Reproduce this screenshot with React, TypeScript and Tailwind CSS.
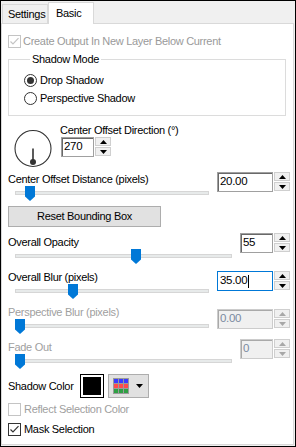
import clsx from "clsx";

function Check({ checked, disabled }: { checked?: boolean; disabled?: boolean }) {
  const c = disabled ? "#c4c4c4" : "#333333";
  return (
    <svg width="13" height="13" viewBox="0 0 13 13" className="shrink-0">
      <rect x="0.5" y="0.5" width="12" height="12" fill="#fff" stroke={c} />
      {checked && <path d="M2.5 6.5 L5 9 L10.5 3.2" fill="none" stroke={c} strokeWidth="1.2" />}
    </svg>
  );
}

function Radio({ on }: { on?: boolean }) {
  return (
    <svg width="13" height="13" viewBox="0 0 13 13" className="shrink-0">
      <circle cx="6.5" cy="6.5" r="6" fill="#fff" stroke="#333" />
      {on && <circle cx="6.5" cy="6.5" r="3.5" fill="#333" />}
    </svg>
  );
}

function Arrow({ up, color }: { up?: boolean; color: string }) {
  return (
    <svg width="7" height="4" viewBox="0 0 7 4">
      <path d={up ? "M0 4 L3.5 0 L7 4 Z" : "M0 0 L7 0 L3.5 4 Z"} fill={color} />
    </svg>
  );
}

function Spin({
  value,
  box,
  disabled,
  focused,
}: {
  value: string;
  box: string;
  disabled?: boolean;
  focused?: boolean;
}) {
  const arrow = disabled ? "#a8a8a8" : "#000";
  return (
    <div className="flex h-[20px] shrink-0">
      <div
        className={clsx(
          "flex h-full items-center border pl-[2px] text-[11.5px]",
          box,
          focused && "border-[#0078d7] bg-white",
          disabled && "border-[#cccccc] bg-[#f0f0f0] text-[#7a8aa0] shadow-[inset_1px_1px_0_#a9a9a9]",
          !focused && !disabled && "border-[#a0a0a0] bg-white shadow-[inset_1px_1px_0_#696969]"
        )}
      >
        {value}
        {focused && <span className="ml-[1px] h-[13px] w-[1px] bg-black" />}
      </div>
      <div className="ml-[1px] flex w-[16px] flex-col gap-[1px]">
        <div className="flex h-[9px] items-center justify-center border border-[#cfcfcf] bg-[#f0f0f0]">
          <Arrow up color={arrow} />
        </div>
        <div className="flex h-[9px] items-center justify-center border border-[#cfcfcf] bg-[#f0f0f0]">
          <Arrow color={arrow} />
        </div>
      </div>
    </div>
  );
}

function Track({ thumb }: { thumb: number }) {
  return (
    <div className="relative ml-[7px] h-[15px] pt-[5px]">
      <div className="h-[4px] border border-[#d6d6d6] bg-[#e7eaea]" />
      <svg width="10" height="15" viewBox="0 0 10 15" className="absolute top-0" style={{ left: thumb }}>
        <path d="M0 0 H10 V10.5 L5 15 L0 10.5 Z" fill="#0078d7" />
      </svg>
    </div>
  );
}

function SliderBlock({
  label,
  value,
  box,
  thumb,
  disabled,
  focused,
  labelOff,
  spinOff,
  className,
}: {
  label: string;
  value: string;
  box: string;
  thumb: number;
  disabled?: boolean;
  focused?: boolean;
  labelOff?: string;
  spinOff?: string;
  className?: string;
}) {
  return (
    <div className={clsx("flex items-start pl-[6px] pr-[3px]", className)}>
      <div className={clsx("mr-[8px] flex-1", labelOff)}>
        <div className={clsx("h-[14px] whitespace-nowrap leading-[14px]", disabled && "text-[#a0a0a0]")}>{label}</div>
        <Track thumb={thumb} />
      </div>
      <div className={spinOff}>
        <Spin value={value} box={box} disabled={disabled} focused={focused} />
      </div>
    </div>
  );
}

function ColorGrid() {
  const rows = ["#3a3aff", "#ff4a4a", "#2ea043"];
  return (
    <svg width="16" height="16" viewBox="0 0 16 16">
      <rect x="0" y="0" width="16" height="16" fill="#9a9a9a" />
      {rows.map((c, r) =>
        [0, 1, 2].map((col) => (
          <rect key={`${r}-${col}`} x={1 + col * 5} y={1 + r * 5} width="4" height="4" fill={c} />
        ))
      )}
    </svg>
  );
}

export default function App() {
  return (
    <div className="h-[447px] w-[296px] overflow-hidden border border-black bg-[#f0f0f0] text-[11px] tracking-[-0.3px] text-black [font-family:'Liberation_Sans',Arial,sans-serif]">
      {/* tab strip */}
      <div className="flex h-[22px] items-end pl-[1px]">
        <div className="flex h-[19px] w-[46px] items-center border border-b-0 border-[#d9d9d9] bg-[#f0f0f0] pl-[5px]">
          Settings
        </div>
        <div className="relative z-10 -mb-[1px] h-[22px] w-[46px] border border-b-0 border-[#d9d9d9] bg-white pl-[7px] pt-[3px] leading-[14px]">
          Basic
        </div>
      </div>

      {/* tab page */}
      <div className="h-[422px] w-[293px] border border-[#d9d9d9] bg-white">
        <div className="mt-[10px] flex h-[14px] items-center gap-[2px] whitespace-nowrap pl-[6px] text-[#9a9a9a]">
          <Check checked disabled />
          <span>Create Output In New Layer Below Current</span>
        </div>

        <fieldset className="ml-[6px] mr-[7px] mt-[4px] border border-[#dcdcdc] pb-[10px] pl-[15px]">
          <legend className="ml-[6px] px-[2px] leading-[14px]">Shadow Mode</legend>
          <div className="mt-[7px] flex h-[14px] items-center gap-[3px]">
            <Radio on />
            <span>Drop Shadow</span>
          </div>
          <div className="mt-[4px] flex h-[14px] items-center gap-[3px]">
            <Radio />
            <span>Perspective Shadow</span>
          </div>
        </fieldset>

        <div className="mt-[7px] flex items-start">
          <svg width="40" height="40" viewBox="0 0 40 40" className="ml-[11px] mt-[5px] shrink-0">
            <circle cx="20" cy="20.5" r="18" fill="none" stroke="#333" strokeWidth="1.1" />
            <line x1="20" y1="20.5" x2="20" y2="34" stroke="#333" strokeWidth="1.6" />
            <circle cx="20" cy="34" r="3" fill="#333" />
          </svg>
          <div className="ml-[7px]">
            <div className="h-[14px] leading-[14px]">Center Offset Direction (°)</div>
            <div className="ml-[1px]">
              <Spin value="270" box="w-[33px]" />
            </div>
          </div>
        </div>

        <SliderBlock
          className="mt-[4px]"
          label="Center Offset Distance (pixels)"
          value="20.00"
          box="w-[56px]"
          thumb={10}
        />

        <div className="ml-[6px] mt-[5px] flex h-[21px] w-[153px] items-center justify-center border border-[#adadad] bg-[#e1e1e1]">
          Reset Bounding Box
        </div>

        <SliderBlock
          className="mt-[6px]"
          labelOff="mt-[2px]"
          label="Overall Opacity"
          value="55"
          box="w-[33px]"
          thumb={116}
        />
        <SliderBlock
          className="mt-[6px]"
          spinOff="mt-[1px]"
          label="Overall Blur (pixels)"
          value="35.00"
          box="w-[56px]"
          thumb={53}
          focused
        />
        <SliderBlock
          className="mt-[6px]"
          spinOff="mt-[4px]"
          label="Perspective Blur (pixels)"
          value="0.00"
          box="w-[56px]"
          thumb={0}
          disabled
        />
        <SliderBlock
          className="mt-[5px]"
          labelOff="mt-[1px]"
          label="Fade Out"
          value="0"
          box="w-[33px]"
          thumb={0}
          disabled
        />

        <div className="mt-[5px] flex h-[24px] items-center pl-[6px]">
          <span className="w-[72px] whitespace-nowrap">Shadow Color</span>
          <div className="h-[24px] w-[24px] border border-black bg-white p-[2px]">
            <div className="h-full w-full bg-black" />
          </div>
          <div className="ml-[4px] flex h-[24px] w-[41px] items-center border border-[#adadad] bg-[#e1e1e1] pl-[4px]">
            <ColorGrid />
            <span className="ml-[7px] flex">
              <Arrow color="#000" />
            </span>
          </div>
        </div>

        <div className="mt-[4px] flex h-[14px] items-center gap-[3px] pl-[6px] text-[#a0a0a0]">
          <Check disabled />
          <span>Reflect Selection Color</span>
        </div>
        <div className="mt-[6px] flex h-[14px] items-center gap-[3px] pl-[6px]">
          <Check checked />
          <span>Mask Selection</span>
        </div>
      </div>
    </div>
  );
}
